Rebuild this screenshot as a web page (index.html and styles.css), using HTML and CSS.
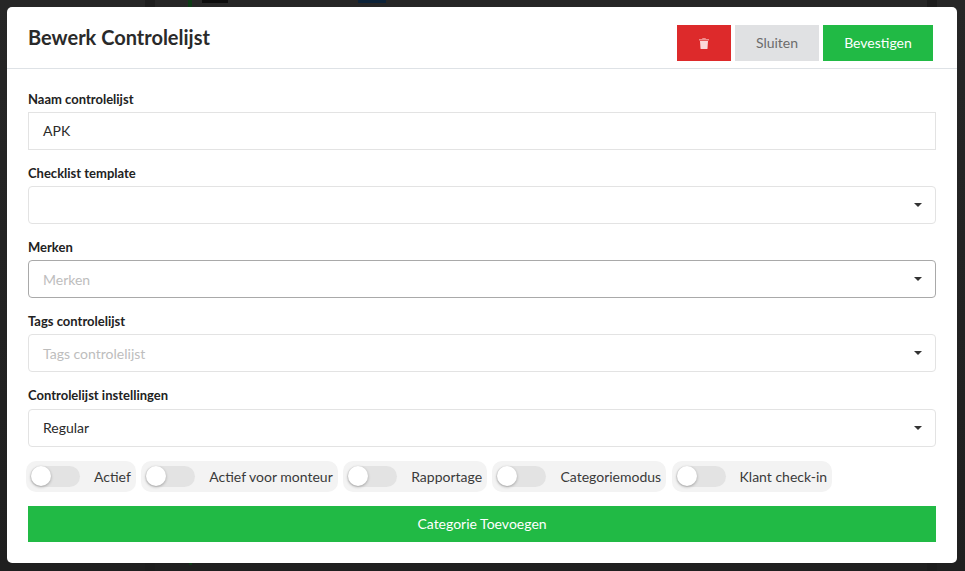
FILE: index.html
```html
<!DOCTYPE html>
<html lang="nl">
<head>
<meta charset="utf-8">
<title>Bewerk Controlelijst</title>
<link rel="stylesheet" href="styles.css">
</head>
<body>
<div class="page-behind">
  <span class="peek peek-col"></span>
  <span class="peek peek-green"></span>
  <span class="peek peek-dark"></span>
  <span class="peek peek-navy"></span>
  <span class="peek peek-right"></span>
  <span class="peek peek-dot"></span>
</div>
<div class="backdrop">
  <div class="modal">
    <header class="modal-header">
      <h1 class="modal-title">Bewerk Controlelijst</h1>
      <div class="actions">
        <button class="btn btn-danger" type="button" aria-label="Verwijderen">
          <svg class="trash" viewBox="0 0 10 11" width="10" height="11"><path class="trash-lid" d="M3.500 0h3l.5 1h3v1.500H0V1h3z"/><path class="trash-can" d="M1 3h8l-.5 7.400a.7.7 0 0 1-.7.600H2.200a.7.7 0 0 1-.7-.6z"/></svg>
        </button>
        <button class="btn btn-light" type="button">Sluiten</button>
        <button class="btn btn-success" type="button">Bevestigen</button>
      </div>
    </header>
    <main class="modal-body">
      <div class="field">
        <label class="label">Naam controlelijst</label>
        <div class="control">APK</div>
      </div>
      <div class="field">
        <label class="label">Checklist template</label>
        <div class="control select"><span class="caret"></span></div>
      </div>
      <div class="field">
        <label class="label">Merken</label>
        <div class="control select focused"><span class="placeholder">Merken</span><span class="caret"></span></div>
      </div>
      <div class="field">
        <label class="label">Tags controlelijst</label>
        <div class="control select"><span class="placeholder">Tags controlelijst</span><span class="caret"></span></div>
      </div>
      <div class="field">
        <label class="label label-tall">Controlelijst instellingen</label>
        <div class="control select"><span>Regular</span><span class="caret"></span></div>
      </div>
      <div class="toggles">
        <div class="toggle"><span class="switch"><span class="knob"></span></span><span class="toggle-text">Actief</span></div>
        <div class="toggle"><span class="switch"><span class="knob"></span></span><span class="toggle-text">Actief voor monteur</span></div>
        <div class="toggle"><span class="switch"><span class="knob"></span></span><span class="toggle-text">Rapportage</span></div>
        <div class="toggle"><span class="switch"><span class="knob"></span></span><span class="toggle-text">Categoriemodus</span></div>
        <div class="toggle"><span class="switch"><span class="knob"></span></span><span class="toggle-text">Klant check-in</span></div>
      </div>
      <button class="btn btn-success btn-block" type="button">Categorie Toevoegen</button>
    </main>
  </div>
</div>
</body>
</html>
```
FILE: styles.css
```css
* { box-sizing: border-box; }
html, body { margin: 0; height: 100%; }
body { background: linear-gradient(#262626, #1f1f1f); font-family: Lato, "Open Sans", sans-serif; color: #212529; overflow: hidden; }
.page-behind { position: absolute; inset: 0; }
.peek { position: absolute; display: block; }
.peek-col { left: 145px; top: 0; width: 10px; height: 571px; background: #1d1d1d; }
.peek-green { left: 188px; top: 0; width: 4px; height: 7px; background: #0e3a16; }
.peek-dark { left: 202px; top: 0; width: 26px; height: 3px; background: #0c0c0c; }
.peek-navy { left: 358px; top: 0; width: 28px; height: 3px; background: #0c2238; }
.peek-right { left: 927px; top: 0; width: 10px; height: 571px; background: #1c1c1c; }
.peek-dot { left: 189px; top: 563px; width: 3px; height: 2px; background: #0e3a16; }
.backdrop { position: relative; height: 571px; padding: 7px 8px 8px 7px; }
.modal { width: 950px; height: 556px; background: #fff; border-radius: 5px; display: flex; flex-direction: column; }
.modal-header { height: 62px; flex: none; border-bottom: 1px solid #dee2e6; padding: 18px 24px 0 21px; display: flex; justify-content: space-between; align-items: flex-start; }
.modal-title { margin: 0; font-size: 20px; line-height: 24px; font-weight: 700; color: #2a2a2a; }
.actions { display: flex; gap: 4px; }
.btn { border: 0; border-radius: 0; font-family: inherit; font-size: 14px; height: 36px; padding: 0 0 2px; display: flex; align-items: center; justify-content: center; }
.btn-danger { width: 54px; background: #dd2a2b; padding: 0; }
.btn-light { width: 84px; background: #e0e1e3; color: #6c6c6c; }
.btn-success { width: 110px; background: #21ba45; color: #fff; }
.btn-block { width: 100%; }
.trash { display: block; }
.trash-lid { fill: #f08c8c; }
.trash-can { fill: #fbd9d9; }
.modal-body { padding: 21px 21px 0; }
.field { margin-bottom: 14px; }
.label { display: block; font-size: 13px; font-weight: 700; line-height: 16px; height: 22px; padding-top: 1px; color: #222; }
.label-tall { height: 23px; }
.control { height: 38px; border: 1px solid #e3e3e3; padding: 0 14px; font-size: 14px; line-height: 36px; color: #2a2a2a; position: relative; }
.select { border-radius: 4px; }
.focused { border-color: #a9a9a9; }
.placeholder { display: block; padding-top: 1px; color: #bdbdbd; }
.caret { position: absolute; right: 13px; top: 16px; width: 0; height: 0; border-left: 4px solid transparent; border-right: 4px solid transparent; border-top: 4px solid #333; }
.toggles { display: flex; margin: 0 0 14px -2px; gap: 5.4px; }
.toggle { height: 31px; background: #f3f3f3; border-radius: 10px; display: flex; align-items: center; padding: 0 5px 0 4px; }
.switch { width: 50px; height: 21px; border-radius: 11px; background: #e3e3e3; position: relative; display: block; }
.knob { position: absolute; left: 1px; top: 0; width: 20px; height: 20px; border-radius: 50%; background: #fff; box-shadow: 0 1px 3px rgba(0,0,0,.3); }
.toggle-text { font-size: 14px; margin-left: 14px; color: #3a3a3a; }
```
